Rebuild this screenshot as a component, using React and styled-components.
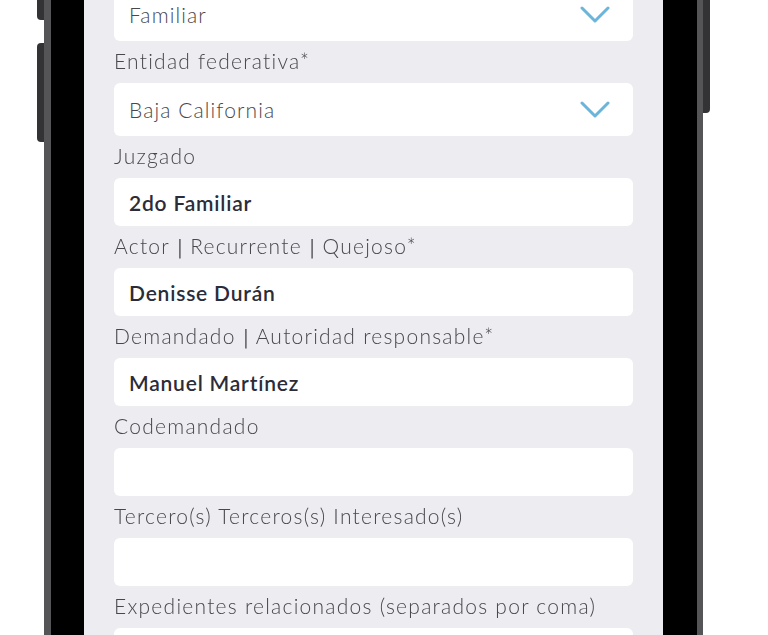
import React from "react"
import styled, { createGlobalStyle } from "styled-components"

const GlobalStyle = createGlobalStyle`
  html, body {
    margin: 0;
    padding: 0;
    background: #ffffff;
    overflow: hidden;
  }
  * {
    box-sizing: border-box;
  }
`

const S = {
  Stage: styled.div`
    height: 635px;
    overflow: hidden;
    padding-left: 44px;
    background: #fff;
  `,
  Phone: styled.div`
    position: relative;
    width: 659px;
    height: 635px;
    background: #000;
    border-left: 7px solid #555558;
    border-right: 6px solid #555558;
    padding: 0 34px 0 33px;
  `,
  SideButton: styled.div`
    position: absolute;
    width: 7px;
    background: #333335;
    ${p => (p.$right ? "right: -13px;" : "left: -14px;")}
    top: ${p => p.$top}px;
    height: ${p => p.$height}px;
    border-radius: ${p => (p.$right ? "0 4px 4px 0" : "4px 0 0 4px")};
  `,
  Screen: styled.div`
    height: 100%;
    overflow: hidden;
    background: #ececf1;
    padding: 0 30px;
  `,
  Form: styled.div`
    display: flex;
    flex-direction: column;
    margin-top: -12px;
  `,
  Label: styled.div`
    height: 42px;
    line-height: 40px;
    padding-bottom: 2px;
    font-family: "Lato", "Noto Sans", sans-serif;
    font-weight: 300;
    font-size: 21px;
    letter-spacing: 1.25px;
    color: #47474d;
    white-space: nowrap;
    will-change: transform;
  `,
  Sep: styled.span`
    font-family: "DejaVu Sans", sans-serif;
    font-weight: 400;
    font-size: 20px;
    color: #6a6a70;
    letter-spacing: 0;
  `,
  Select: styled.div`
    height: 53px;
    background: #fff;
    border-radius: 6px;
    display: flex;
    align-items: center;
    justify-content: space-between;
    padding: 0 23px 0 15px;
    font-family: "Lato", "Noto Sans", sans-serif;
    font-weight: 300;
    font-size: 21px;
    letter-spacing: 1.1px;
    color: #47474d;
  `,
  Input: styled.div`
    height: 48px;
    background: #fff;
    border-radius: 6px;
    display: flex;
    align-items: center;
    padding: 0 15px;
    font-family: "Lato", "Noto Sans", sans-serif;
    font-weight: 600;
    font-size: 21px;
    letter-spacing: 0.8px;
    color: #2c2c38;
  `
}

const Chevron = () => (
  <svg width="30" height="18" viewBox="0 0 30 18" fill="none">
    <polyline
      points="2,2 15,15 28,2"
      stroke="#6cb5da"
      strokeWidth="3"
      strokeLinecap="round"
      strokeLinejoin="round"
    />
  </svg>
)

const fields = [
  { type: "select", value: "Familiar" },
  { label: "Entidad federativa*", type: "select", value: "Baja California" },
  { label: "Juzgado", value: "2do Familiar" },
  { label: "Actor | Recurrente | Quejoso*", value: "Denisse Durán" },
  { label: "Demandado | Autoridad responsable*", value: "Manuel Martínez" },
  { label: "Codemandado", value: "" },
  { label: "Tercero(s) Terceros(s) Interesado(s)", value: "" },
  { label: "Expedientes relacionados (separados por coma)", value: "" }
]

const renderLabel = text =>
  text.split(" | ").map((part, i) => (
    <React.Fragment key={i}>
      {i > 0 && (
        <>
          {" "}
          <S.Sep>|</S.Sep>{" "}
        </>
      )}
      {part}
    </React.Fragment>
  ))

const App = () => (
  <>
    <GlobalStyle />
    <S.Stage>
      <S.Phone>
        <S.SideButton $top={-40} $height={60} />
        <S.SideButton $top={43} $height={99} />
        <S.SideButton $right $top={-40} $height={153} />
        <S.Screen>
          <S.Form>
            {fields.map((f, i) => (
              <React.Fragment key={i}>
                {f.label && <S.Label>{renderLabel(f.label)}</S.Label>}
                {f.type === "select" ? (
                  <S.Select>
                    <span>{f.value}</span>
                    <Chevron />
                  </S.Select>
                ) : (
                  <S.Input>{f.value}</S.Input>
                )}
              </React.Fragment>
            ))}
          </S.Form>
        </S.Screen>
      </S.Phone>
    </S.Stage>
  </>
)

export default App
